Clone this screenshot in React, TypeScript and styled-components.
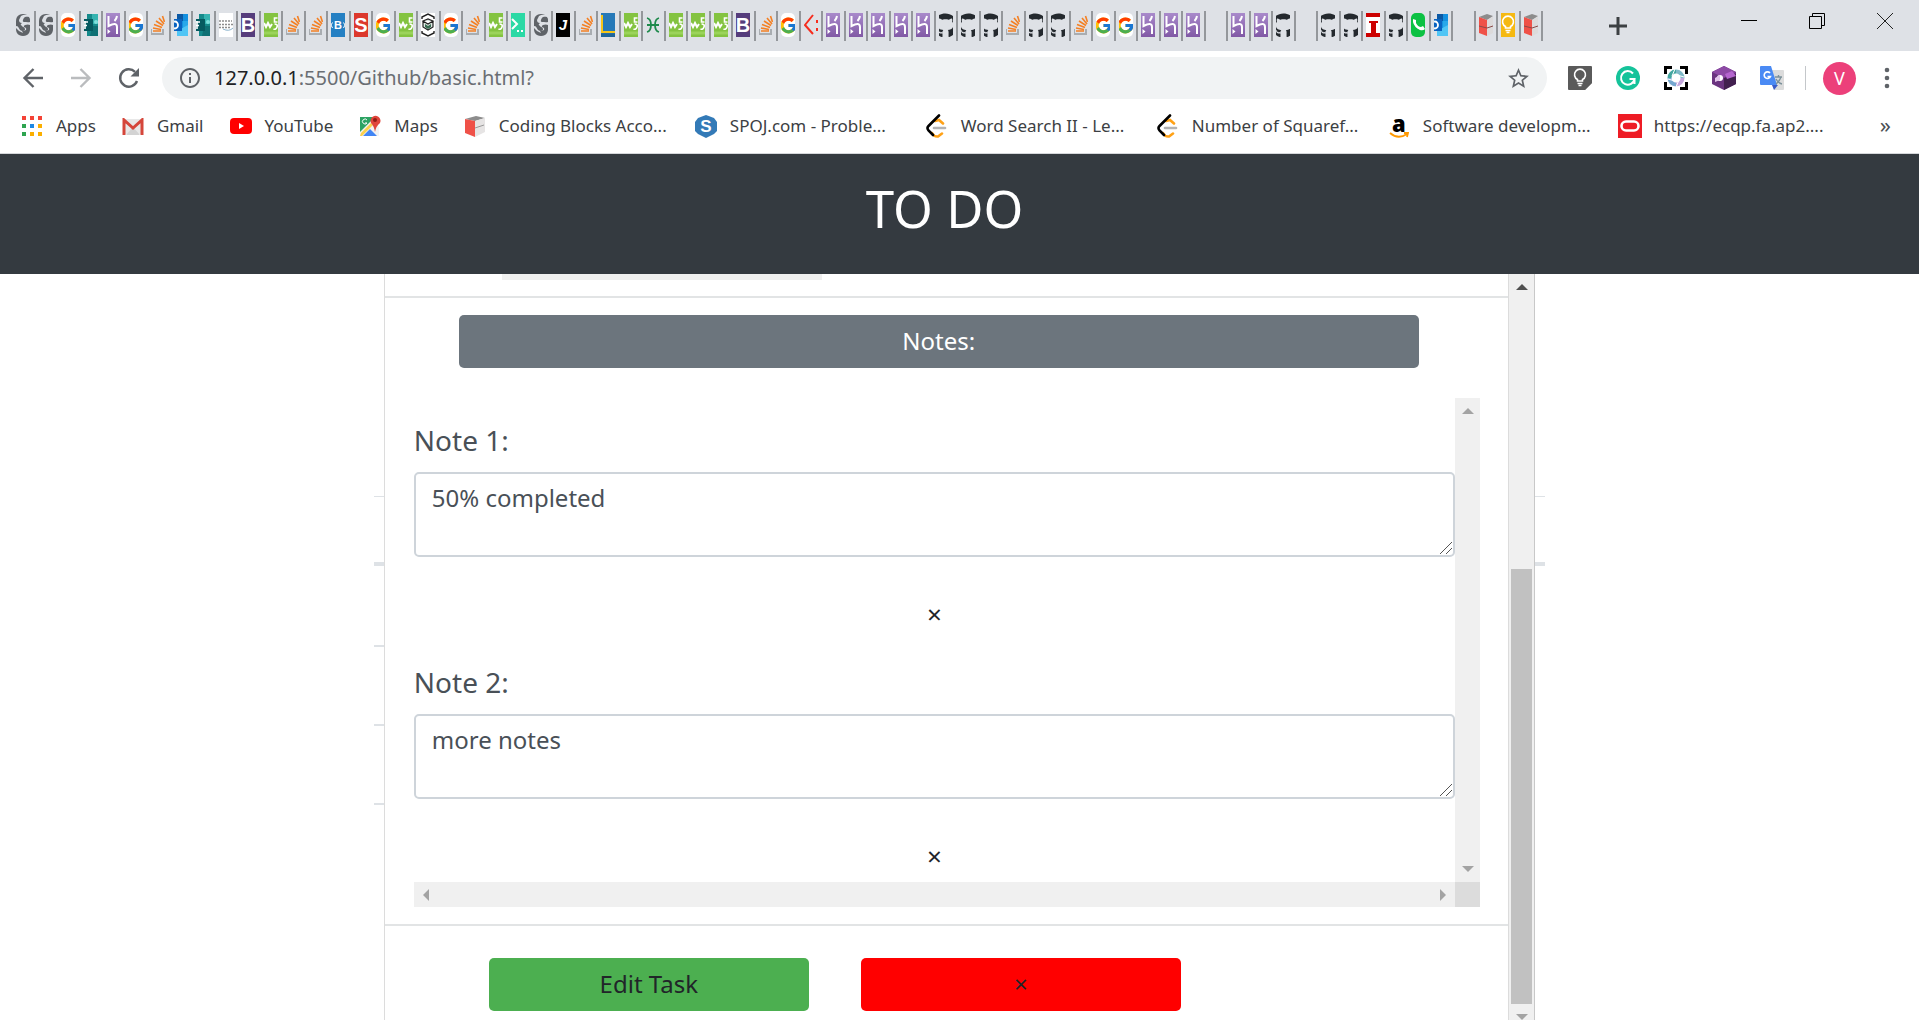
import React from "react";
import styled, { createGlobalStyle } from "styled-components";
import { FcGoogle } from "react-icons/fc";
import { FaGithub } from "react-icons/fa";
import { MdInfoOutline, MdStarBorder } from "react-icons/md";

const sans = `"Noto Sans", "Open Sans", "Liberation Sans", sans-serif`;

const GlobalStyle = createGlobalStyle`
  *, *::before, *::after { box-sizing: border-box; }
  body { margin: 0; background: #fff; font-family: ${sans}; }
  button, textarea, input { font-family: inherit; margin: 0; }
`;

const Window = styled.div`
  display: flex;
  flex-direction: column;
  height: 100vh;
  overflow: hidden;
`;

/* ---------- tab strip ---------- */

const TabStrip = styled.div`
  display: flex;
  flex: none;
  height: 51px;
  padding-left: 13px;
  background: #dee1e6;
`;

const TabList = styled.div`
  flex: 1;
  display: flex;
  padding: 11px 0 10px;
`;

const Tab = styled.button`
  flex: 1 1 0;
  min-width: 0;
  display: flex;
  align-items: center;
  justify-content: center;
  padding: 0 0 2px;
  border: 0;
  border-right: 2px solid #94979b;
  background: none;
`;

const Favicon = styled.span<{ $bg?: string; $round?: boolean }>`
  flex: none;
  display: flex;
  align-items: center;
  justify-content: center;
  width: 14px;
  height: 24px;
  overflow: hidden;
  background: ${(p) => p.$bg || "transparent"};
  border-radius: ${(p) => (p.$round ? "5px" : "0")};
  svg { flex: none; }
`;

const StripActions = styled.div`
  flex: none;
  width: 376px;
  display: flex;
  justify-content: space-between;
  padding: 0 26px 0 65px;
`;

const WindowButtons = styled.div`
  display: flex;
  gap: 52px;
  height: 42px;
  align-items: center;
`;

const IconButton = styled.button`
  flex: none;
  display: flex;
  align-items: center;
  justify-content: center;
  padding: 0;
  border: 0;
  background: none;
  color: #5f6368;
`;

/* ---------- toolbar ---------- */

const Toolbar = styled.div`
  flex: none;
  display: flex;
  align-items: center;
  height: 54px;
  padding: 0 20px 0 21px;
`;

const NavButtons = styled.div`
  display: flex;
  gap: 24px;
  margin-right: 21px;
`;

const Omnibox = styled.div`
  flex: 1;
  display: flex;
  align-items: center;
  height: 42px;
  padding: 0 16px;
  border-radius: 21px;
  background: #f1f3f4;
  color: #5f6368;
`;

const Address = styled.div`
  flex: 1;
  padding-left: 12px;
  font-size: 20px;
  line-height: 28px;
  color: #6a6e73;
  b { font-weight: 400; color: #202124; }
`;

const Extensions = styled.div`
  display: flex;
  align-items: center;
  gap: 24px;
  margin-left: 21px;
`;

const Divider = styled.div`
  width: 1px;
  height: 24px;
  margin: 0 17px 0 21px;
  background: #c4c7ca;
`;

const Avatar = styled.button`
  width: 33px;
  height: 33px;
  padding: 0;
  border: 0;
  border-radius: 50%;
  background: #ec407a;
  color: #fff;
  font-size: 18px;
  line-height: 33px;
  margin-right: 19px;
`;

/* ---------- bookmarks ---------- */

const Bookmarks = styled.nav`
  flex: none;
  display: flex;
  align-items: center;
  gap: 25px;
  height: 49px;
  padding: 0 28px 6px 20px;
  border-bottom: 1px solid #d5d7da;
`;

const Bookmark = styled.a`
  flex: none;
  display: flex;
  align-items: center;
  gap: 12px;
  color: #3c4043;
  font-size: 17px;
  line-height: 24px;
  white-space: nowrap;
  text-decoration: none;
`;

const BookmarkIcon = styled.span`
  display: flex;
  align-items: center;
  justify-content: center;
  width: 24px;
  height: 24px;
`;

const BookmarkLabel = styled.span<{ $long?: boolean }>`
  width: ${(p) => (p.$long ? "170px" : "auto")};
`;

const Overflow = styled.button`
  margin-left: auto;
  padding: 0 0 4px;
  border: 0;
  background: none;
  color: #4b4f54;
  font-size: 22px;
  line-height: 24px;
`;

/* ---------- page ---------- */

const PageHeader = styled.header`
  flex: none;
  display: flex;
  align-items: center;
  justify-content: center;
  height: 120px;
  padding: 0 30px 12px 0;
  background: #343a40;
`;

const Title = styled.h1`
  margin: 0;
  color: #fff;
  font-size: 51px;
  font-weight: 400;
  line-height: 60px;
`;

const Stage = styled.main`
  flex: 1;
  min-height: 0;
  display: grid;
  grid-template: minmax(0, 1fr) / minmax(0, 1fr);
  justify-items: center;
  overflow: hidden;
`;

const BackTable = styled.div`
  grid-area: 1 / 1;
  width: 61%;
  padding-top: 222px;
`;

const Rule = styled.div<{ $weight: number; $gap: number; $half?: boolean }>`
  width: ${(p) => (p.$half ? "50%" : "100%")};
  height: ${(p) => p.$weight}px;
  margin-bottom: ${(p) => p.$gap}px;
  background: #dee2e6;
`;

const Modal = styled.section`
  grid-area: 1 / 1;
  width: 60%;
  display: flex;
  background: #fff;
  border-left: 1px solid #dcdcdc;
  border-right: 1px solid #c8c8c8;
`;

const ModalContent = styled.div`
  flex: 1;
  min-width: 0;
  overflow: hidden;
`;

const Track = styled.div<{ $wide?: boolean }>`
  flex: none;
  display: flex;
  flex-direction: column;
  align-items: center;
  justify-content: space-between;
  width: ${(p) => (p.$wide ? "26px" : "25px")};
  padding: ${(p) => (p.$wide ? "10px 0 0" : "10px 0")};
  background: #f0f0f0;
  border-left: ${(p) => (p.$wide ? "1px solid #dcdcdc" : "0")};
`;

const Thumb = styled.div`
  width: 21px;
  flex: 0 0 435px;
  margin: auto 0 10px;
  background: #c1c1c1;
`;

const PreviousField = styled.div`
  width: 30%;
  height: 6px;
  margin-left: 88px;
  background: #f0f0f0;
`;

const FieldSection = styled.div`
  height: 24px;
  padding: 0 28px 0 29px;
  border-bottom: 2px solid #e2e4e5;
`;

const NotesSection = styled.div`
  padding: 17px 28px 17px 29px;
`;

const NotesButton = styled.button`
  display: block;
  width: 90%;
  height: 53px;
  margin: 0 0 30px 45px;
  padding: 0 0 2px;
  border: 0;
  border-radius: 5px;
  background: #6c757d;
  color: #fff;
  font-size: 24px;
  line-height: 36px;
`;

const NotesBox = styled.div`
  display: grid;
  grid-template-columns: minmax(0, 1fr) 25px;
`;

const Note = styled.div`
  display: flex;
  flex-direction: column;
  height: 242px;
  padding-top: 21px;
`;

const NoteLabel = styled.label`
  margin-bottom: 11px;
  color: #495057;
  font-size: 28px;
  line-height: 42px;
`;

const FieldWrap = styled.div`
  position: relative;
  height: 85px;
  svg {
    position: absolute;
    right: 3px;
    bottom: 3px;
  }
`;

const NoteField = styled.textarea`
  display: block;
  width: 100%;
  height: 85px;
  padding: 6px 16px;
  border: 2px solid #ced4da;
  border-radius: 5px;
  background: #fff;
  color: #495057;
  font-size: 24px;
  line-height: 36px;
  resize: none;
  overflow: hidden;
`;

const RemoveNote = styled.button`
  align-self: center;
  height: 53px;
  margin-top: 30px;
  padding: 0 18px;
  border: 0;
  background: none;
  color: #212529;
  font-size: 26px;
  line-height: 36px;
`;

const HorizontalTrack = styled.div`
  display: flex;
  align-items: center;
  justify-content: space-between;
  height: 25px;
  padding: 0 9px;
  background: #f0f0f0;
`;

const Corner = styled.div`
  background: #dcdcdc;
`;

const ModalFooter = styled.footer`
  display: flex;
  gap: 52px;
  padding: 32px 29px 32px 104px;
  border-top: 2px solid #e2e4e5;
`;

const ActionButton = styled.button<{ $color: string }>`
  width: 320px;
  height: 53px;
  padding: 0 0 2px;
  border: 0;
  border-radius: 5px;
  background: ${(p) => p.$color};
  color: #212529;
  font-size: 24px;
  line-height: 36px;
`;

/* ---------- drawings ---------- */

const Arrow = ({ dir, color = "#a3a3a3" }: { dir: "up" | "down" | "left" | "right"; color?: string }) => {
  const d = { up: "M0 6L6 0L12 6Z", down: "M0 0H12L6 6Z", left: "M6 0V12L0 6Z", right: "M0 0V12L6 6Z" }[dir];
  const flat = dir === "up" || dir === "down";
  return (
    <svg width={flat ? 12 : 6} height={flat ? 6 : 12} aria-hidden="true">
      <path d={d} fill={color} />
    </svg>
  );
};

const Grip = () => (
  <svg width="12" height="12" aria-hidden="true">
    <path d="M0 12L12 0M6 12L12 6" stroke="#555" strokeWidth="1" />
  </svg>
);

const Globe = () => (
  <svg width="14" height="24" viewBox="0 0 14 24">
    <path d="M3 2Q7 0 11 2Q14 4 14 8V16Q14 20 11 22Q7 24 3 22Q0 20 0 16V8Q0 4 3 2Z" fill="#5f6368" />
    <path d="M14 4Q8 3 7 7Q6 9 9 9L14 8V12Q12 11 9 12Q7 13 8 14Q11 15 10 17Q8 18 6 18L7 20Q3 19 0 15V13L5 14Q4 11 6 10Q3 10 3 7L5 3Q8 1 12 2Z" fill="#dee1e6" />
    <path d="M9 4Q13 3 14 7V9Q11 10 8 8Q7 6 9 4ZM1 12Q5 11 7 14Q9 14 9 17Q7 19 4 17Z" fill="#5f6368" />
  </svg>
);

const Forms = () => (
  <svg width="14" height="24" viewBox="0 0 14 24">
    <path d="M3 1H14V23H3Z" fill="#158a8b" />
    <path d="M8 1H14V11H8Z" fill="#36b3b0" />
    <path d="M8 13H14V23H6Z" fill="#0f7074" />
    <path d="M0 6H9V18H0Z" fill="#065a60" />
    <circle cx="12" cy="9" r="2" fill="#7ee0dc" />
    <path d="M0 9H4M0 12.500H3M1 8V16" fill="none" stroke="#fff" strokeWidth="1.600" />
  </svg>
);

const Outlook = () => (
  <svg width="14" height="24" viewBox="0 0 14 24">
    <path d="M3 1H14V23H3Z" fill="#1490df" />
    <path d="M3 1H9V8H3Z" fill="#0c59a4" />
    <path d="M9 8H14V15H9Z" fill="#28a8ea" />
    <path d="M3 18L14 12V23H3Z" fill="#50c5f5" />
    <path d="M0 6H8V18H0Z" fill="#0a63c0" />
    <ellipse cx="1" cy="12" rx="3" ry="3.500" fill="none" stroke="#fff" strokeWidth="1.800" />
  </svg>
);

const Heroku = () => (
  <svg width="14" height="24" viewBox="0 0 14 24">
    <defs>
      <linearGradient id="heroku" x1="0" y1="0" x2="0" y2="1">
        <stop offset="0" stopColor="#a98acb" />
        <stop offset="1" stopColor="#8159a5" />
      </linearGradient>
    </defs>
    <rect width="14" height="24" fill="url(#heroku)" />
    <path d="M2.500 3V13Q11 8.500 11 14V21M11 3Q10.500 6 8.500 8" fill="none" stroke="#fff" strokeWidth="2" />
    <path d="M1.500 16L4.500 18.500L1.500 21Z" fill="#fff" />
  </svg>
);

const Cube = () => (
  <svg width="14" height="24" viewBox="0 0 14 24">
    <rect width="14" height="24" fill="#fff" />
    <path d="M1 6V4L7 1L13 4V6M1 18V20L7 23L13 20V18" fill="none" stroke="#222" strokeWidth="1.400" />
    <path d="M2 8L7 6L12 8L7 11ZM2 8V14L7 17L12 14V8" fill="#dfe8e3" stroke="#222" strokeWidth="1.200" />
    <path d="M4 11L7 13L10 11V14L7 16L4 14Z" fill="#356b50" />
  </svg>
);

const World = () => (
  <svg width="14" height="24" viewBox="0 0 14 24">
    <path d="M0 8H13M0 11.500H14M0 14.500H12" stroke="#8d8d8d" strokeWidth="1.600" strokeDasharray="2 1" />
    <path d="M4 16Q10 19 14 15" stroke="#8cb4ce" fill="none" />
  </svg>
);

const Letter = ({ children, size = 20, color = "#fff", italic = false }: { children: string; size?: number; color?: string; italic?: boolean }) => (
  <svg width="14" height="24" viewBox="0 0 14 24">
    <text x="7" y={12 + size * 0.36} textAnchor="middle" fontFamily="Liberation Sans, sans-serif" fontWeight="700" fontStyle={italic ? "italic" : "normal"} fontSize={size} fill={color}>
      {children}
    </text>
  </svg>
);

const Blocks = () => (
  <svg width="14" height="24" viewBox="0 0 14 24">
    <path d="M0 4L8 1L14 3L8 7Z" fill="#8c8c8c" />
    <path d="M0 4L8 7V23L0 20Z" fill="#ef5148" />
    <path d="M8 7L14 4V20L8 23Z" fill="#dcdada" />
    <path d="M0 13L8 15L14 13" stroke="#8a4a48" fill="none" />
  </svg>
);

const Bulb = ({ color }: { color: string }) => (
  <svg width="24" height="24" viewBox="0 0 24 24">
    <path d="M1 0H23Q24 0 24 1V17L17 24H1Q0 24 0 23V1Q0 0 1 0Z" fill={color} />
    <path d="M24 17H17V24Z" fill={color} opacity=".6" />
    <path d="M9.500 15V13.500A5.500 5.500 0 1 1 14.500 13.500V15ZM9.500 17.500H14.500M10.500 19.500H13.500" fill="none" stroke="#fff" strokeWidth="1.600" />
  </svg>
);

const favicons: Record<string, React.ReactNode> = {
  globe: <Favicon><Globe /></Favicon>,
  google: <Favicon $bg="#fff" $round><FcGoogle size={19} /></Favicon>,
  forms: <Favicon><Forms /></Favicon>,
  heroku: <Favicon><Heroku /></Favicon>,
  stack: (
    <Favicon>
      <svg width="14" height="24" viewBox="0 0 14 24" fill="none">
        <path d="M0 16V21H12V16" stroke="#a9adb1" strokeWidth="2" />
        <path d="M2 18H10M2 15L10 16.500M3 11.500L11 14.500M5 8L12 12.500M8 5L13 11M11.500 3L13.500 9" stroke="#f48024" strokeWidth="1.600" />
      </svg>
    </Favicon>
  ),
  outlook: <Favicon><Outlook /></Favicon>,
  world: <Favicon $bg="#fff"><World /></Favicon>,
  bootstrap: <Favicon $bg="#563d7c"><Letter>B</Letter></Favicon>,
  w3: (
    <Favicon $bg="#84c341">
      <svg width="14" height="24" viewBox="0 0 14 24" fill="none">
        <path d="M0 10L2 14L4 10L6 14L8 11" stroke="#fff" strokeWidth="2" />
        <path d="M13.500 5H10.500V9H13.500M10.500 11Q14 11 13 14Q12 17 9.500 16" stroke="#fff" strokeWidth="1.600" />
        <path d="M0 20H14" stroke="#9bd35b" strokeWidth="3" />
      </svg>
    </Favicon>
  ),
  bsb: (
    <Favicon $bg="#2580c3">
      <svg width="14" height="24" viewBox="0 0 14 24">
        <text x="7" y="16" textAnchor="middle" fontFamily="Liberation Sans" fontWeight="700" fontSize="11" fill="#fff">B</text>
        <path d="M1.500 9.500L0 12L1.500 15M12.500 9.500L14 12L12.500 15" fill="none" stroke="#fff" />
      </svg>
    </Favicon>
  ),
  s: <Favicon $bg="#dc382c"><Letter>S</Letter></Favicon>,
  cube: <Favicon><Cube /></Favicon>,
  term: (
    <Favicon $bg="#2bd9a5">
      <svg width="14" height="24" viewBox="0 0 14 24">
        <path d="M1 6L6 11L1 16M6 18H8M10 18H12" fill="none" stroke="#fff" strokeWidth="2" />
      </svg>
    </Favicon>
  ),
  j: <Favicon $bg="#000"><Letter size={15} italic>J</Letter></Favicon>,
  l: (
    <Favicon $bg="#2679b8">
      <svg width="14" height="24" viewBox="0 0 14 24">
        <path d="M1 2V19H14" fill="none" stroke="#f5c518" strokeWidth="2" />
        <path d="M0 20.500H14V24H0Z" fill="#1f659a" />
      </svg>
    </Favicon>
  ),
  hr: (
    <Favicon>
      <svg width="14" height="24" viewBox="0 0 14 24">
        <path d="M1 5Q5 6 5 12T1 19M13 5Q9 6 9 12T13 19M1 12H13" fill="none" stroke="#1f8a4c" strokeWidth="1.800" />
      </svg>
    </Favicon>
  ),
  code: (
    <Favicon>
      <svg width="14" height="24" viewBox="0 0 14 24">
        <path d="M9 2L1 12L9 21" fill="none" stroke="#f62d1e" strokeWidth="2" />
        <path d="M13 7V10M13 15V18" stroke="#f62d1e" strokeWidth="2" />
      </svg>
    </Favicon>
  ),
  github: <Favicon><FaGithub size={25} color="#24292e" /></Favicon>,
  i: (
    <Favicon $bg="#fff">
      <svg width="14" height="24" viewBox="0 0 14 24">
        <path d="M0 0H14V4H0ZM0 20H14V24H0ZM5 8H12V10H10V20H5V10H3V8Z" fill="#c00" />
      </svg>
    </Favicon>
  ),
  whatsapp: (
    <Favicon $bg="#0cc143" $round>
      <svg width="14" height="24" viewBox="0 0 14 24">
        <path d="M2 6L5 7V10Q7 14 10 14L12 13L14 16Q12 18 9 17Q3 14 2 9Z" fill="#fff" />
      </svg>
    </Favicon>
  ),
  blocks: <Favicon><Blocks /></Favicon>,
  keep: <Favicon $bg="#f5b912"><Bulb color="#f5b912" /></Favicon>,
  empty: null,
};

const tabs = (
  "globe globe google forms heroku google stack outlook forms world bootstrap w3 stack stack bsb s google w3 " +
  "cube google stack w3 term globe j stack l w3 hr w3 w3 w3 bootstrap stack google code " +
  "heroku heroku heroku heroku heroku github github github stack github github stack google google " +
  "heroku heroku heroku empty heroku heroku github empty github github i github whatsapp outlook empty blocks keep blocks"
).split(" ");

const Leet = () => (
  <svg width="24" height="24" viewBox="0 0 24 24" fill="none" strokeLinecap="round" strokeWidth="2.600">
    <path d="M10 7L14 6L18 9.500M7 19Q9 23 13 22.500L17 19.500" stroke="#ffa116" />
    <path d="M9 14H20" stroke="#b3b3b3" />
    <path d="M14 1.500L3.500 12Q1.500 14 3.500 16.500L8 21" stroke="#000" />
  </svg>
);

const AmazonMark = styled.span`
  display: flex;
  flex-direction: column;
  align-items: center;
  color: #000;
  font-family: "Open Sans", sans-serif;
  font-size: 22px;
  font-weight: 800;
  line-height: 18px;
`;

const bookmarks: { label: string; long?: boolean; icon: React.ReactNode }[] = [
  {
    label: "Apps",
    icon: (
      <svg width="20" height="20" viewBox="0 0 20 20">
        {["#f44336", "#f44336", "#f44336", "#2ea44f", "#1e88e5", "#fbaf00", "#2ea44f", "#fbaf00", "#fbaf00"].map((c, i) => (
          <rect key={i} x={(i % 3) * 8} y={Math.floor(i / 3) * 8} width="4" height="4" fill={c} />
        ))}
      </svg>
    ),
  },
  {
    label: "Gmail",
    icon: (
      <svg width="22" height="17" viewBox="0 0 22 17">
        <path d="M1 1H21V16H1Z" fill="#e8e8e8" />
        <path d="M4 17L11 9L18 17Z" fill="#d3d3d3" />
        <path d="M2 17V2L11 10L20 2V17" fill="none" stroke="#d5463b" strokeWidth="3" />
      </svg>
    ),
  },
  {
    label: "YouTube",
    icon: (
      <svg width="22" height="16" viewBox="0 0 22 16">
        <rect width="22" height="16" rx="4" fill="#f00" />
        <path d="M9 5L14 8L9 11Z" fill="#fff" />
      </svg>
    ),
  },
  {
    label: "Maps",
    icon: (
      <svg width="22" height="22" viewBox="0 0 22 22">
        <path d="M1 2H18V21H1Z" fill="#2da363" />
        <path d="M1 17L13 5L20 12V21H1Z" fill="#f2f2f2" />
        <path d="M2 18L12 8L14 10L3 21H1Z" fill="#fbd04b" />
        <path d="M4 21L11 14L18 21Z" fill="#4285f4" />
        <path d="M16 17Q15 11 12 8A5 5 0 1 1 21 8Q17 11 16 17Z" fill="#e0443a" />
        <circle cx="16" cy="5" r="2" fill="#8e1d15" />
        <path d="M8 5A2.500 2.500 0 1 0 8 8H6" stroke="#fff" fill="none" />
      </svg>
    ),
  },
  {
    label: "Coding Blocks Acco...",
    long: true,
    icon: (
      <svg width="22" height="22" viewBox="0 0 22 22">
        <path d="M1 4L12 1L21 3L11 6Z" fill="#8c8c8c" />
        <path d="M1 4L11 6V22L1 18Z" fill="#ef5148" />
        <path d="M11 6L21 3V17L11 22Z" fill="#e6e4e4" />
        <path d="M11 13L20 10" stroke="#999" />
      </svg>
    ),
  },
  {
    label: "SPOJ.com - Proble...",
    long: true,
    icon: (
      <svg width="24" height="24" viewBox="0 0 24 24">
        <path d="M12 1L20 4L23 8V17L20 20L12 24L4 20L1 17V8L4 4Z" fill="#337ab7" />
        <text x="12" y="18" textAnchor="middle" fontFamily="Liberation Sans" fontWeight="700" fontSize="17" fill="#fff">S</text>
      </svg>
    ),
  },
  { label: "Word Search II - Le...", long: true, icon: <Leet /> },
  { label: "Number of Squaref...", long: true, icon: <Leet /> },
  {
    label: "Software developm...",
    long: true,
    icon: (
      <AmazonMark>
        a
        <svg width="20" height="6" viewBox="0 0 20 6">
          <path d="M1 1Q9 8 18 2M15 1L19 1L18 5" fill="none" stroke="#f90" strokeWidth="1.800" />
        </svg>
      </AmazonMark>
    ),
  },
  {
    label: "https://ecqp.fa.ap2....",
    long: true,
    icon: (
      <svg width="24" height="24" viewBox="0 0 24 24">
        <rect width="24" height="24" fill="#ee1c25" />
        <rect x="3.500" y="7.500" width="17" height="9" rx="4.500" fill="none" stroke="#fff" strokeWidth="2.600" />
      </svg>
    ),
  },
];

const notes = ["50% completed", "more notes"];

export default function App() {
  return (
    <Window>
      <GlobalStyle />
      <TabStrip>
        <TabList>
          {tabs.map((t, i) => (
            <Tab key={i} aria-label={`Tab ${i + 1}`}>{favicons[t]}</Tab>
          ))}
        </TabList>
        <StripActions>
          <IconButton aria-label="New tab">
            <svg width="20" height="20" viewBox="0 0 20 20">
              <path d="M10 1V19M1 10H19" stroke="#3c4043" strokeWidth="3" />
            </svg>
          </IconButton>
          <WindowButtons>
            <IconButton aria-label="Minimize">
              <svg width="16" height="16"><path d="M0 7.500H16" stroke="#000" /></svg>
            </IconButton>
            <IconButton aria-label="Restore">
              <svg width="16" height="16" fill="none" stroke="#000">
                <path d="M.5 3.500H12.500V15.500H.5ZM3.500 3.500V.5H15.500V12.500H12.500" />
              </svg>
            </IconButton>
            <IconButton aria-label="Close">
              <svg width="16" height="16"><path d="M0 0L16 16M16 0L0 16" stroke="#222" /></svg>
            </IconButton>
          </WindowButtons>
        </StripActions>
      </TabStrip>

      <Toolbar>
        <NavButtons>
          <IconButton aria-label="Back">
            <svg width="24" height="24" viewBox="0 0 24 24" fill="none" stroke="#5f6368" strokeWidth="2.400">
              <path d="M22 12H4M12.500 3L3.500 12L12.500 21" />
            </svg>
          </IconButton>
          <IconButton aria-label="Forward">
            <svg width="24" height="24" viewBox="0 0 24 24" fill="none" stroke="#babcbe" strokeWidth="2.400">
              <path d="M2 12H20M11.500 3L20.500 12L11.500 21" />
            </svg>
          </IconButton>
          <IconButton aria-label="Reload">
            <svg width="24" height="24" viewBox="0 0 24 24">
              <path d="M20 15A8.700 8.700 0 1 1 18 5.800" fill="none" stroke="#5f6368" strokeWidth="2.400" />
              <path d="M22 2V10.500H13.500Z" fill="#5f6368" />
            </svg>
          </IconButton>
        </NavButtons>
        <Omnibox>
          <MdInfoOutline size={24} />
          <Address><b>127.0.0.1</b>:5500/Github/basic.html?</Address>
          <IconButton aria-label="Bookmark this page"><MdStarBorder size={25} /></IconButton>
        </Omnibox>
        <Extensions>
          <IconButton aria-label="Keep"><Bulb color="#5a5a5a" /></IconButton>
          <IconButton aria-label="Grammarly">
            <svg width="24" height="24" viewBox="0 0 24 24" fill="none">
              <circle cx="12" cy="12" r="12" fill="#15c39a" />
              <path d="M17 7.500A6.800 6.800 0 1 0 18.500 13H13.500M18.500 13V18" stroke="#fff" strokeWidth="2" />
            </svg>
          </IconButton>
          <IconButton aria-label="Screen capture">
            <svg width="24" height="24" viewBox="0 0 24 24" fill="none">
              <path d="M1.500 8V1.500H8M16 1.500H22.500V8M22.500 16V22.500H16M8 22.500H1.500V16" stroke="#000" strokeWidth="3" />
              <path d="M12 5.500A6.500 6.500 0 0 0 5.500 12" stroke="#43a6a0" strokeWidth="4" />
              <path d="M5.500 12A6.500 6.500 0 0 0 12 18.500" stroke="#76a8d0" strokeWidth="4" />
              <path d="M12 18.500A6.500 6.500 0 0 0 18.500 12" stroke="#c4a7dc" strokeWidth="4" />
              <path d="M18.500 12A6.500 6.500 0 0 0 12 5.500" stroke="#7fb9c8" strokeWidth="4" />
              <path d="M11 3L8 10M4 13L11 15M12 21L15 14M20 11L13 9" stroke="#fff" />
            </svg>
          </IconButton>
          <IconButton aria-label="Cube">
            <svg width="24" height="24" viewBox="0 0 24 24">
              <path d="M12 0L24 6V18L12 24L0 18V6Z" fill="#6b3480" />
              <path d="M12 0L24 6L12 12L0 6Z" fill="#8d4aa5" />
              <path d="M12 12L24 8V18L12 24Z" fill="#42204f" />
              <path d="M13 8L20 5L24 10L15 13Z" fill="#b565cf" />
              <circle cx="8" cy="12" r="3" fill="#fff" />
              <path d="M3 12L8 9V14L3 16Z" fill="#e2c4ea" />
            </svg>
          </IconButton>
          <IconButton aria-label="Translate">
            <svg width="24" height="24" viewBox="0 0 24 24">
              <path d="M8 4H23Q24 4 24 5V23Q24 24 23 24H14Z" fill="#dcdcdc" />
              <path d="M12 19H18L14 24Z" fill="#3a5bc7" />
              <path d="M1 0H11L17 19H1Q0 19 0 18V1Q0 0 1 0Z" fill="#4a8af4" />
              <path d="M10 7A3.300 3.300 0 1 0 10.500 10.500H7.500" fill="none" stroke="#fff" strokeWidth="1.600" />
              <path d="M15 11H22M18.500 9V11M21 11Q19 16 16 18M16 13Q18 17 22 18" fill="none" stroke="#7c919b" strokeWidth="1.400" />
            </svg>
          </IconButton>
        </Extensions>
        <Divider />
        <Avatar aria-label="Profile">V</Avatar>
        <IconButton aria-label="Menu">
          <svg width="24" height="24" fill="#5f6368">
            <circle cx="12" cy="4" r="2.300" />
            <circle cx="12" cy="12" r="2.300" />
            <circle cx="12" cy="20" r="2.300" />
          </svg>
        </IconButton>
      </Toolbar>

      <Bookmarks>
        {bookmarks.map((b) => (
          <Bookmark key={b.label} href="#">
            <BookmarkIcon>{b.icon}</BookmarkIcon>
            <BookmarkLabel $long={b.long}>{b.label}</BookmarkLabel>
          </Bookmark>
        ))}
        <Overflow aria-label="More bookmarks">»</Overflow>
      </Bookmarks>

      <PageHeader>
        <Title>TO DO</Title>
      </PageHeader>

      <Stage>
        <BackTable aria-hidden="true">
          <Rule $weight={1} $gap={65} />
          <Rule $weight={4} $gap={79} />
          <Rule $weight={2} $gap={77} $half />
          <Rule $weight={2} $gap={77} $half />
          <Rule $weight={2} $gap={77} $half />
        </BackTable>
        <Modal>
          <ModalContent>
            <FieldSection>
              <PreviousField />
            </FieldSection>
            <NotesSection>
              <NotesButton>Notes:</NotesButton>
              <NotesBox>
                <div>
                  {notes.map((n, i) => (
                    <Note key={n}>
                      <NoteLabel htmlFor={`note-${i}`}>Note {i + 1}:</NoteLabel>
                      <FieldWrap>
                        <NoteField id={`note-${i}`} defaultValue={n} />
                        <Grip />
                      </FieldWrap>
                      <RemoveNote aria-label="Remove note">×</RemoveNote>
                    </Note>
                  ))}
                </div>
                <Track>
                  <Arrow dir="up" />
                  <Arrow dir="down" />
                </Track>
                <HorizontalTrack>
                  <Arrow dir="left" />
                  <Arrow dir="right" />
                </HorizontalTrack>
                <Corner />
              </NotesBox>
            </NotesSection>
            <ModalFooter>
              <ActionButton $color="#4caf50">Edit Task</ActionButton>
              <ActionButton $color="#ff0000">×</ActionButton>
            </ModalFooter>
          </ModalContent>
          <Track $wide>
            <Arrow dir="up" color="#505050" />
            <Thumb />
            <Arrow dir="down" />
          </Track>
        </Modal>
      </Stage>
    </Window>
  );
}
